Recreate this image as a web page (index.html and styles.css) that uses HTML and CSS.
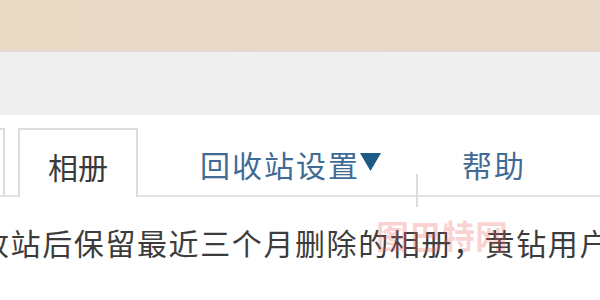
FILE: index.html
```html
<!DOCTYPE html>
<html lang="zh-CN">
<head>
<meta charset="utf-8">
<link rel="stylesheet" href="styles.css">
</head>
<body>
<div class="page">
  <header class="topbar"></header>
  <div class="graybar"></div>
  <main class="content">
    <nav class="tabs">
      <div class="tab tab-prev"></div>
      <div class="tab tab-active">相册</div>
      <div class="tab tab-link tab-recycle">回收站设置<svg class="caret" width="21" height="20" viewBox="0 0 21 20"><polygon points="0,2 21,2 10.5,20" fill="#1e5a87"/></svg></div>
      <div class="divider"></div>
      <div class="tab tab-link tab-help">帮助</div>
    </nav>
    <p class="notice">收站后保留最近三个月删除的相册，黄钻用户可保留更久</p>
    <div class="watermark">图巴特网</div>
  </main>
</div>
</body>
</html>
```

FILE: styles.css
```css
html, body {
  margin: 0;
  padding: 0;
  width: 600px;
  height: 300px;
  overflow: hidden;
  background: #ffffff;
  font-family: "Noto Sans CJK SC", "Noto Sans", sans-serif;
}
.page {
  display: flex;
  flex-direction: column;
  width: 600px;
  height: 300px;
}
.topbar {
  height: 50px;
  background: linear-gradient(90deg, #ead9c4 0%, #e8d9c8 50%, #e8d8c6 100%);
  border-bottom: 2px solid #e2dad2;
}
.graybar {
  height: 63px;
  background: #efefef;
}
.content {
  position: relative;
  flex: 1;
  background: #ffffff;
  overflow: hidden;
}
.tabs {
  display: flex;
  align-items: flex-end;
  margin-top: 13px;
  height: 67px;
  border-bottom: 2px solid #e2e2e2;
}
.tab {
  height: 67px;
  box-sizing: border-box;
  display: flex;
  align-items: center;
  justify-content: center;
  font-size: 30px;
  line-height: 1;
  padding-top: 4px;
}
.tab-prev {
  width: 5px;
  border-right: 2px solid #dddddd;
  border-top: 2px solid #dddddd;
  margin-right: 13px;
}
.tab-active {
  width: 120px;
  border: 2px solid #dddddd;
  border-bottom: none;
  height: 69px;
  margin-bottom: -2px;
  background: #ffffff;
  color: #3a3a3a;
}
.tab-link {
  color: #3f6b94;
  letter-spacing: 2px;
}
.tab-recycle {
  margin-left: 62px;
}
.caret {
  margin-left: 0;
  margin-bottom: 6px;
}
.divider {
  align-self: flex-end;
  width: 2px;
  height: 33px;
  margin-bottom: -12px;
  margin-left: 35px;
  background: #dddddd;
}
.tab-help {
  margin-left: 44px;
}
.notice {
  margin: 24px 0 0 -21px;
  white-space: nowrap;
  font-size: 30px;
  line-height: 42px;
  color: #3c3c3c;
  letter-spacing: 1.6px;
}
.watermark {
  position: absolute;
  left: 376px;
  top: 96px;
  font-size: 33px;
  font-weight: bold;
  color: rgba(240, 95, 95, 0.28);
}
```
